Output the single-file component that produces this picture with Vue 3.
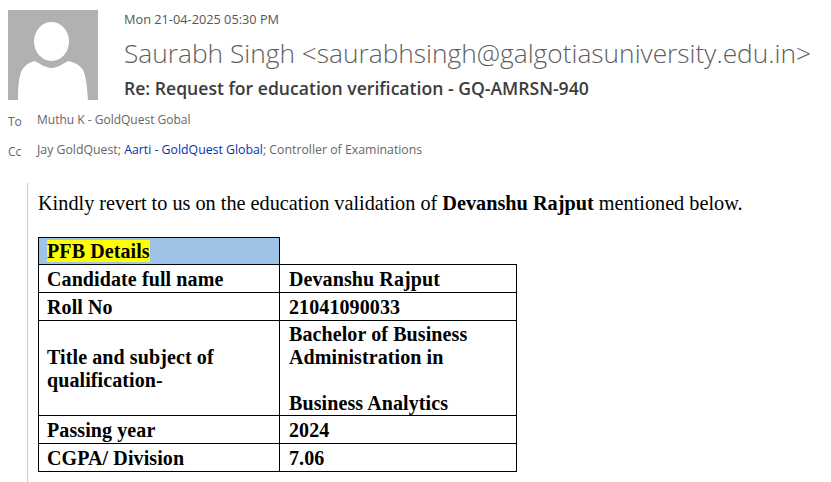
<script setup>
const rows = [
  { label: "Candidate full name", value: ["Devanshu Rajput"], height: 28 },
  { label: "Roll No", value: ["21041090033"], height: 28 },
  {
    label: "Title and subject of qualification-",
    value: ["Bachelor of Business Administration in", "Business Analytics"],
    height: 95,
  },
  { label: "Passing year", value: ["2024"], height: 28 },
  { label: "CGPA/ Division", value: ["7.06"], height: 28 },
];
</script>

<template>
  <div class="mail">
    <header class="mail__head">
      <svg class="mail__avatar" viewBox="0 0 90 90" width="90" height="90">
        <rect width="90" height="90" fill="#b1b1b1" />
        <ellipse cx="43.5" cy="31.5" rx="17.5" ry="19.5" fill="#fff" />
        <path
          d="M10 90C10 76 11 66 14 60C17 55 22 52 27 51C32 54 38 58 43.5 58C49 58 55 54 60 51C66 52 72 55 75 60C78 66 79 76 80 90Z"
          fill="#fff"
        />
      </svg>
      <div class="mail__meta">
        <div class="mail__date">Mon 21-04-2025 05:30 PM</div>
        <div class="mail__from">Saurabh Singh &lt;saurabhsingh@galgotiasuniversity.edu.in&gt;</div>
        <div class="mail__subject">Re: Request for education verification - GQ-AMRSN-940</div>
      </div>
    </header>

    <div class="mail__line mail__line--to">
      <span class="mail__key">To</span>
      <span>Muthu K - GoldQuest Gobal</span>
    </div>
    <div class="mail__line mail__line--cc">
      <span class="mail__key">Cc</span>
      <span class="mail__names">Jay GoldQuest; <a class="mail__link">Aarti - GoldQuest Global</a>; Controller of Examinations</span>
    </div>

    <div class="mail__body">
      <p class="mail__intro">
        Kindly revert to us on the education validation of <b>Devanshu Rajput</b> mentioned below.
      </p>
      <table class="details">
        <colgroup>
          <col class="details__col-a" />
          <col class="details__col-b" />
        </colgroup>
        <tbody>
          <tr class="details__top">
            <td class="details__title"><mark>PFB Details</mark></td>
            <td class="details__blank"></td>
          </tr>
          <tr v-for="row in rows" :key="row.label" :style="{ height: row.height + 'px' }">
            <td>{{ row.label }}</td>
            <td>
              <div
                v-for="(line, index) in row.value"
                :key="index"
                :class="{ details__gap: index > 0 }"
              >{{ line }}</div>
            </td>
          </tr>
        </tbody>
      </table>
    </div>
  </div>
</template>

<style scoped>
.mail {
  width: 831px;
  height: 482px;
  overflow: hidden;
  background: #fff;
  font-family: "Open Sans", sans-serif;
  color: #444;
}

.mail__head {
  display: flex;
  gap: 26px;
  padding: 10px 0 0 8px;
}

.mail__avatar {
  display: block;
  flex: none;
}

.mail__meta {
  min-width: 0;
  white-space: nowrap;
}

.mail__date {
  font-size: 12.75px;
  line-height: 18px;
  color: #555;
}

.mail__from {
  margin-top: 7px;
  font-size: 26.3px;
  font-weight: 300;
  line-height: 36px;
  color: #5e5e5e;
}

.mail__subject {
  margin-top: 5px;
  font-size: 17.6px;
  font-weight: 600;
  line-height: 24px;
  color: #3c3c3c;
}

.mail__line {
  display: flex;
  font-size: 12px;
  line-height: 16px;
  color: #666;
  white-space: nowrap;
  padding-left: 8px;
}

.mail__line--to {
  margin-top: 12px;
}

.mail__line--cc {
  margin-top: 14px;
}

.mail__key {
  width: 29px;
  flex: none;
  padding-top: 2px;
  margin-bottom: -2px;
}

.mail__names {
  font-size: 12.3px;
}

.mail__link {
  color: #0033b0;
}

.mail__body {
  margin: 25px 0 0 27px;
  padding: 8px 0 0 10px;
  height: 300px;
  border-left: 1px solid #ccc;
  font-family: "Liberation Serif", serif;
  color: #000;
}

.mail__intro {
  margin: 0 0 22px;
  font-size: 20.25px;
  line-height: 24px;
  white-space: nowrap;
}

.details {
  width: 478px;
  table-layout: fixed;
  border-collapse: collapse;
  font-size: 20px;
  font-weight: 700;
  line-height: 23px;
  letter-spacing: 0.1px;
}

.details__col-a {
  width: 241px;
}

.details__col-b {
  width: 237px;
}

.details td {
  padding: 1px 9px 0;
  border: 1px solid #000;
}

.details td:first-child {
  padding-left: 8px;
}

.details__top {
  height: 27px;
}

.details .details__title {
  background: #9dc3e6;
}

.details .details__blank {
  border-top: 0;
  border-right: 0;
}

.details__title mark {
  background: #ff0;
  color: #000;
}

.details__gap {
  margin-top: 23px;
}
</style>

<style>
body {
  margin: 0;
}
</style>
